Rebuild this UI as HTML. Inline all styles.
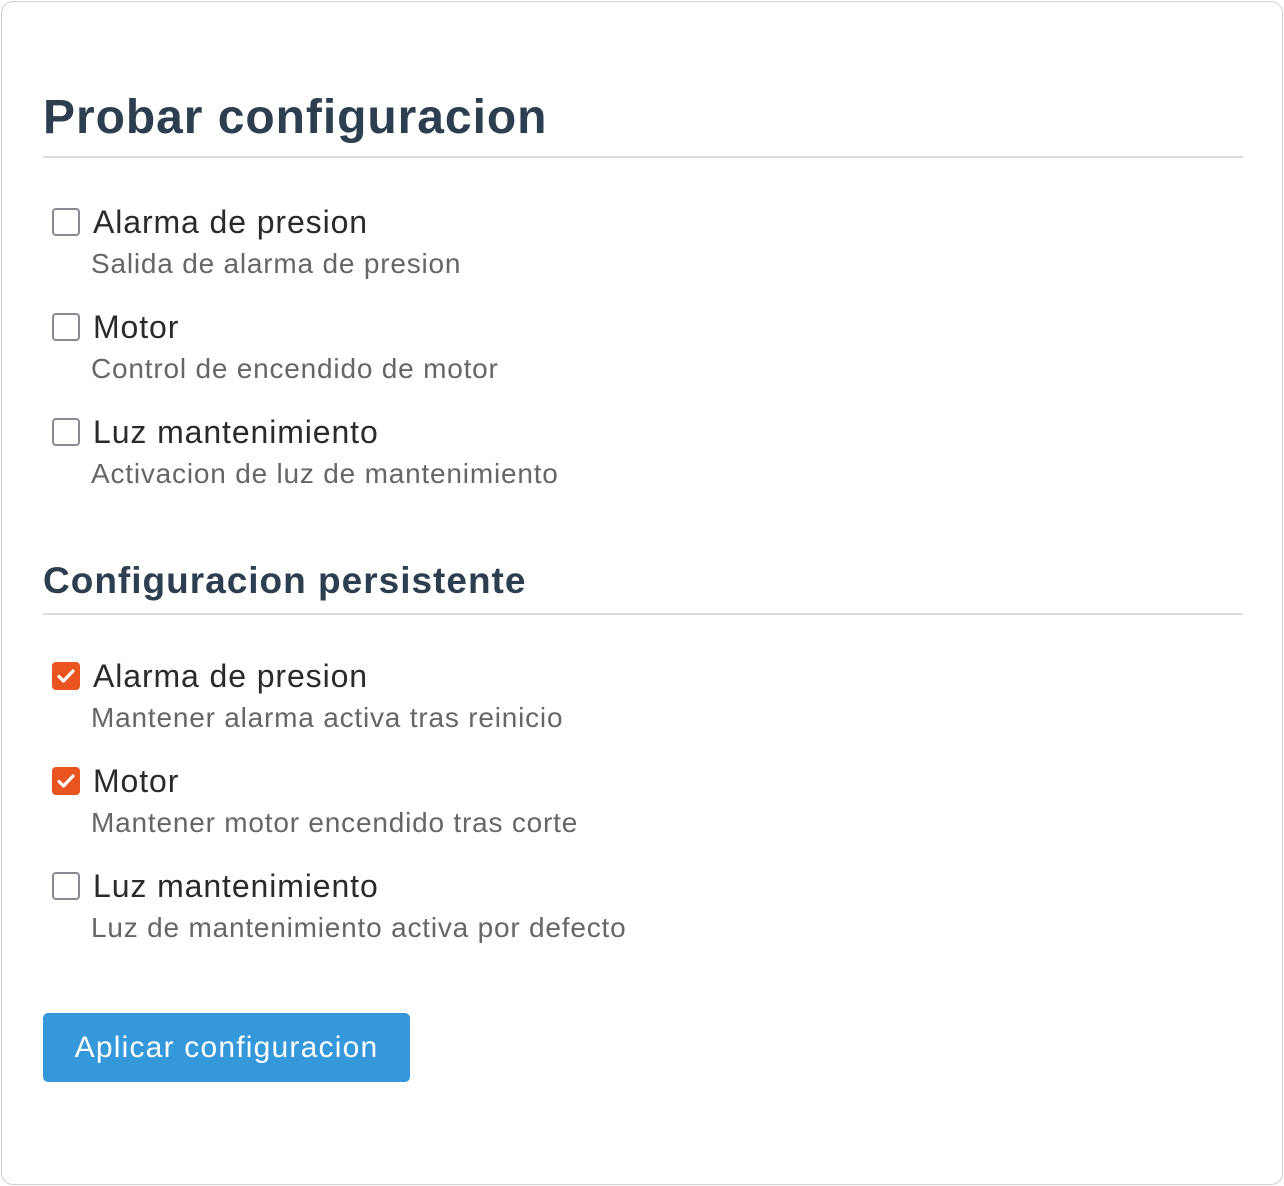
<!DOCTYPE html>
<html><head><style>
body{margin:0;width:1284px;height:1186px;background:#fff;font-family:"Liberation Sans",sans-serif;position:relative;overflow:hidden}
.card{position:absolute;left:1px;top:1px;width:1280px;height:1182px;border:1px solid #cfcfcf;border-radius:12px}
h1,h2{margin:0;color:#2c3e50;font-weight:bold;position:absolute;left:43px;white-space:nowrap}
.hr{position:absolute;left:43px;width:1200px;height:2px;background:#dcdcdc}
.cb{position:absolute;left:52px;width:24px;height:24px;border:2px solid #8a8a95;border-radius:4px;box-sizing:content-box}
.cb.on{background:#e95420;border-color:#e95420}
.lab{position:absolute;left:93px;font-size:32px;color:#2a2a2a;letter-spacing:0.9px;white-space:nowrap}
.desc{position:absolute;left:91px;font-size:28px;color:#666;letter-spacing:0.8px;white-space:nowrap}
.btn{position:absolute;left:43px;top:1013px;width:367px;height:69px;background:#3498db;border-radius:5px;color:#fff;font-size:30px;line-height:69px;text-align:center;letter-spacing:1.2px}
</style></head><body>
<div class="card"></div>
<h1 style="top:90px;font-size:48px;letter-spacing:0.95px">Probar configuracion</h1>
<div class="hr" style="top:156px"></div>
<div class="cb" style="top:208px"></div><div class="lab" style="top:204px">Alarma de presion</div><div class="desc" style="top:248px">Salida de alarma de presion</div>
<div class="cb" style="top:313px"></div><div class="lab" style="top:309px">Motor</div><div class="desc" style="top:353px">Control de encendido de motor</div>
<div class="cb" style="top:418px"></div><div class="lab" style="top:414px">Luz mantenimiento</div><div class="desc" style="top:458px">Activacion de luz de mantenimiento</div>
<h2 style="top:560px;font-size:37px;letter-spacing:1.0px">Configuracion persistente</h2>
<div class="hr" style="top:613px"></div>
<div class="cb on" style="top:662px"><svg width="24" height="24" viewBox="0 0 24 24" style="position:absolute;left:0;top:0"><path d="M5 12.5l4.5 4.5L19 7" stroke="#fff" stroke-width="3.2" fill="none" stroke-linecap="round" stroke-linejoin="round"/></svg></div><div class="lab" style="top:658px">Alarma de presion</div><div class="desc" style="top:702px">Mantener alarma activa tras reinicio</div>
<div class="cb on" style="top:767px"><svg width="24" height="24" viewBox="0 0 24 24" style="position:absolute;left:0;top:0"><path d="M5 12.5l4.5 4.5L19 7" stroke="#fff" stroke-width="3.2" fill="none" stroke-linecap="round" stroke-linejoin="round"/></svg></div><div class="lab" style="top:763px">Motor</div><div class="desc" style="top:807px">Mantener motor encendido tras corte</div>
<div class="cb" style="top:872px"></div><div class="lab" style="top:868px">Luz mantenimiento</div><div class="desc" style="top:912px">Luz de mantenimiento activa por defecto</div>
<div class="btn">Aplicar configuracion</div>
</body></html>
